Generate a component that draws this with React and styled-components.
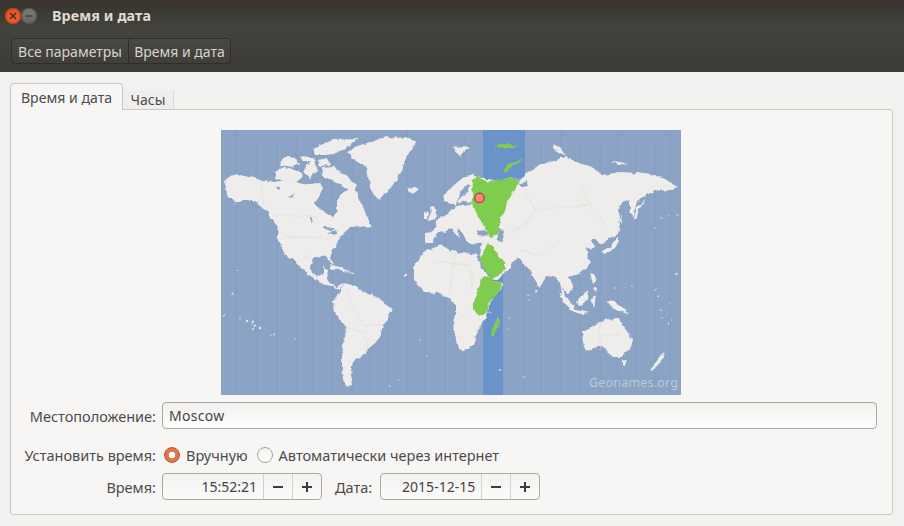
import React from "react";
import styled, { createGlobalStyle } from "styled-components";

const Global = createGlobalStyle`
  html, body { margin: 0; padding: 0; background: #f2f1f0; }
  body { font-family: "Noto Sans", "Open Sans", sans-serif; font-size: 14px; color: #4c4c4c; }
  * { box-sizing: border-box; }
`;

const Window = styled.div`
  width: 904px;
  height: 526px;
  display: flex;
  flex-direction: column;
  overflow: hidden;
  background: #f2f1f0;
`;
const TitleBar = styled.header`
  height: 30px;
  flex: none;
  display: flex;
  align-items: center;
  padding: 0 0 0 5px;
  background: linear-gradient(#36342f, #45433e);
  border-top: 1px solid #4a2f2c;
`;
const WinButton = styled.span`
  width: 16px;
  height: 16px;
  border-radius: 50%;
  display: flex;
  align-items: center;
  justify-content: center;
  background: ${(p) => (p.$close ? "radial-gradient(circle at 50% 60%, #f0643a, #d9481c)" : "linear-gradient(#7c7a75, #66645f)")};
  box-shadow: inset 0 0 0 1px ${(p) => (p.$close ? "#b8401c" : "#55534e")};
`;
const Title = styled.h1`
  margin: 0 0 0 15px;
  font-size: 14.3px;
  font-weight: 700;
  color: #dfdbd2;
  letter-spacing: 0.1px;
`;
const Toolbar = styled.div`
  height: 42px;
  flex: none;
  display: flex;
  align-items: flex-start;
  padding: 8px 0 0 11px;
  background: linear-gradient(#44423d, #3c3b37 90%);
`;
const Crumbs = styled.div`
  display: flex;
  height: 26px;
  border: 1px solid #2f2e2a;
  border-radius: 4px;
  background: linear-gradient(#4a4842, #403e39);
`;
const Crumb = styled.span`
  display: flex;
  align-items: center;
  justify-content: center;
  width: ${(p) => p.$w}px;
  color: #d6d3cb;
  font-size: 14px;
  white-space: nowrap;
  & + & { border-left: 1px solid #2f2e2a; }
`;
const Content = styled.main`
  flex: 1;
  display: flex;
  flex-direction: column;
  padding: 11px 11px 11px 10px;
  min-height: 0;
`;
const Tabs = styled.div`
  display: flex;
  align-items: flex-end;
  height: 26px;
  flex: none;
  position: relative;
  z-index: 1;
`;
const Tab = styled.div`
  display: flex;
  align-items: center;
  justify-content: center;
  width: ${(p) => p.$w}px;
  height: ${(p) => (p.$active ? 27 : 19)}px;
  color: #4c4c4c;
  font-size: 14.1px;
  white-space: nowrap;
  background: ${(p) => (p.$active ? "#f7f6f5" : "#efeeec")};
  border-style: solid;
  border-color: ${(p) => (p.$active ? "#c9c7c3" : "#dcdad6")};
  border-width: ${(p) => (p.$active ? "1px 1px 0 1px" : "0 1px 0 0")};
  border-radius: ${(p) => (p.$active ? "4px 4px 0 0" : "0")};
  margin-bottom: ${(p) => (p.$active ? "-1px" : "0")};
`;
const Panel = styled.section`
  flex: 1;
  display: flex;
  flex-direction: column;
  align-items: center;
  padding: 20px 15px 0 16px;
  background: #f7f6f5;
  border: 1px solid #c9c7c3;
  border-radius: 0 3px 3px 3px;
`;
const MapFrame = styled.div`
  width: 460px;
  height: 265px;
  flex: none;
  margin-left: -3px;
`;
const MapSvg = styled.svg`
  display: block;
  width: 460px;
  height: 265px;
`;
const Form = styled.div`
  align-self: stretch;
  display: grid;
  grid-template-columns: 129px 1fr;
  column-gap: 6px;
  margin-top: 7px;
  align-items: center;
`;
const Label = styled.label`
  justify-self: end;
  font-size: 14.5px;
  white-space: nowrap;
  color: #4c4c4c;
`;
const TextBox = styled.div`
  height: 27px;
  display: flex;
  align-items: center;
  padding: 0 6px;
  border: 1px solid #aaa8a3;
  border-radius: 4px;
  background: linear-gradient(#f1f0ee, #fff);
  font-size: 14px;
  letter-spacing: 0.3px;
  color: #444;
`;
const RadioRow = styled.div`
  display: flex;
  align-items: center;
  height: 27px;
  margin-top: 12px;
  margin-left: 2px;
`;
const Radio = styled.span`
  width: 16px;
  height: 16px;
  border-radius: 50%;
  flex: none;
  margin-right: 6px;
  border: 1px solid ${(p) => (p.$on ? "#b95a33" : "#a5a39e")};
  background: ${(p) => (p.$on ? "radial-gradient(circle, #fff 0 3px, #e37a50 3.6px, #d9673c)" : "linear-gradient(#f2f1ef, #fff)")};
`;
const RadioText = styled.span`
  font-size: 14.5px;
  margin-right: ${(p) => p.$gap || 0}px;
  white-space: nowrap;
`;
const FirstLabel = styled(Label)`
  margin-top: 12px;
`;
const SecondLabel = styled(Label)`
  margin-top: 5px;
`;
const SpinRow = styled.div`
  display: flex;
  align-items: center;
  margin-top: 5px;
`;
const Spin = styled.div`
  width: 160px;
  height: 27px;
  display: flex;
  border: 1px solid #aaa8a3;
  border-radius: 4px;
  background: linear-gradient(#f4f3f1, #fafaf9);
  overflow: hidden;
`;
const SpinValue = styled.span`
  flex: 1;
  text-align: right;
  line-height: 25px;
  padding-right: 6px;
  font-size: 14px;
  color: #444;
`;
const SpinButton = styled.span`
  width: 29px;
  display: flex;
  align-items: center;
  justify-content: center;
  border-left: 1px solid #d4d2ce;
  color: #3c3c3c;
`;
const DateLabel = styled(Label)`
  margin: 0 8px 0 13px;
`;

const Sign = ({ plus }) => (
  <svg width="12" height="12" viewBox="0 0 12 12">
    <path d={plus ? "M1 6h10M6 1v10" : "M1 6h10"} stroke="#3c3c3c" strokeWidth="2" />
  </svg>
);

const land = [
  "M224,181 L229,177 L240,175 L253,178 L273,182 L287,180 L303,184 L320,183 L323,188 L317,200 L315,203 L323,211 L333,218 L337,210 L337,200 L341,194 L350,189 L358,192 L361,204 L367,216 L372,227 L360,226 L350,227 L342,235 L336,245 L330,257 L333,262 L332,265 L327,257 L315,256 L310,265 L312,273 L317,277 L323,273 L323,268 L328,270 L327,278 L331,284 L337,287 L340,284 L345,283 L339,290 L333,287 L327,285 L313,278 L300,268 L294,260 L287,258 L278,238 L277,225 L267,212 L253,200 L243,200 L230,208 L237,203 L228,197 L225,188 Z",
  "M275,172 L284,167 L297,170 L303,177 L296,182 L284,181 L275,178 Z",
  "M279,165 L286,157 L296,158 L300,164 L292,167 Z",
  "M305,165 L314,161 L318,170 L310,178 L304,174 Z",
  "M322,168 L333,167 L345,175 L357,185 L353,193 L343,186 L330,180 L323,175 Z",
  "M313,148 L333,140 L357,139 L343,150 L327,155 L315,155 Z",
  "M300,155 L312,158 L316,162 L303,162 Z",
  "M318,160 L328,158 L330,165 L320,166 Z",
  "M347,153 L360,145 L387,137 L405,138 L417,142 L407,155 L402,170 L397,180 L380,200 L374,195 L370,188 L367,168 L353,158 Z",
  "M407,189 L413,186 L419,189 L413,194 Z",
  "M430,207 L434,206 L437,218 L428,221 L431,214 Z",
  "M424,213 L429,212 L428,219 L424,219 Z",
  "M425,233 L431,232 L437,226 L436,220 L445,216 L451,210 L456,207 L453,203 L445,201 L443,196 L452,187 L462,178 L473,175 L487,180 L500,181 L510,178 L520,181 L525,174 L531,170 L540,165 L550,162 L560,158 L567,157 L578,162 L590,167 L603,175 L620,172 L637,173 L650,175 L663,178 L678,186 L670,190 L655,191 L648,194 L641,198 L636,205 L634,217 L630,212 L630,200 L622,203 L618,210 L620,225 L618,234 L608,240 L600,244 L595,240 L591,240 L594,247 L590,250 L586,246 L588,256 L591,263 L584,270 L575,275 L568,277 L574,288 L568,294 L563,287 L566,300 L563,298 L560,284 L556,277 L545,276 L540,288 L537,285 L530,270 L522,262 L516,258 L511,263 L512,268 L505,272 L498,280 L490,279 L484,266 L479,254 L481,244 L470,243 L466,240 L462,232 L458,228 L459,238 L450,228 L445,232 L437,233 L432,243 L425,243 Z",
  "M414,266 L425,250 L433,248 L443,245 L450,251 L462,252 L476,255 L482,268 L490,280 L503,283 L495,297 L488,305 L486,318 L478,330 L473,345 L462,352 L457,345 L453,325 L456,308 L450,298 L438,293 L425,292 L414,280 Z",
  "M333,303 L338,294 L345,283 L355,286 L363,292 L375,296 L392,308 L388,320 L383,325 L380,337 L367,350 L360,358 L353,362 L350,375 L352,384 L348,387 L343,380 L342,368 L342,357 L345,327 L336,315 Z",
  "M582,333 L592,327 L600,322 L605,318 L611,320 L618,317 L623,326 L632,338 L630,348 L623,357 L613,357 L603,347 L597,347 L586,351 L583,343 Z",
  "M622,360 L626,359 L625,365 L622,364 Z",
  "M650,369 L656,362 L660,356 L663,351 L664,358 L657,366 L651,371 Z",
  "M558,292 L564,296 L572,304 L576,311 L571,309 L563,302 Z",
  "M572,309 L581,311 L590,313 L582,314 L574,312 Z",
  "M576,302 L581,296 L588,290 L587,298 L583,305 L578,306 Z",
  "M591,299 L596,296 L594,307 Z",
  "M607,301 L615,302 L622,307 L629,314 L622,312 L613,309 Z",
  "M590,273 L593,274 L596,281 L593,284 Z",
  "M593,288 L597,287 L596,292 Z",
  "M602,251 L611,246 L617,236 L618,243 L612,251 L604,254 Z",
  "M634,218 L637,208 L646,198 L640,208 L636,218 Z",
  "M619,220 L621,214 L622,224 Z",
  "M535,289 L538,291 L536,294 Z",
  "M453,147 L464,146 L470,148 L460,156 L456,153 Z",
  "M553,145 L559,148 L567,155 L558,153 Z",
  "M611,161 L620,162 L628,164 L618,165 Z",
  "M330,265 L338,267 L352,272 L341,271 L331,268 Z",
  "M347,272 L353,273 L351,275 Z",
];

const green = [
  "M473,178 L478,176 L487,183 L497,180 L510,178 L520,181 L512,195 L505,208 L500,222 L497,235 L492,237 L487,231 L483,225 L473,208 L472,200 Z",
  "M503,172 L508,164 L523,158 L514,165 L507,172 Z",
  "M495,146 L505,144 L518,145 L510,148 L499,148 Z",
  "M488,243 L494,247 L499,258 L505,263 L505,270 L492,280 L485,270 L480,258 Z",
  "M484,276 L494,281 L502,283 L495,297 L488,303 L486,313 L480,316 L473,311 L475,297 Z",
  "M491,335 L493,326 L498,318 L500,321 L497,332 L493,337 Z",
];

const water = [
  "M315,203 L322,200 L330,201 L337,200 L337,210 L333,218 L323,211 Z",
  "M275,188 L281,186 L279,190 Z",
  "M288,198 L294,194 L291,198 Z",
  "M310,214 L312,219 L313,224 L310,220 Z",
  "M323,226 L331,228 L336,229 L330,231 L326,229 Z",
  "M327,233 L337,231 L334,236 Z",
  "M456,207 L460,198 L468,190 L471,185 L465,186 L459,194 Z",
  "M452,207 L462,205 L470,204 L473,202 L466,200 L460,203 L454,205 Z",
  "M477,231 L485,230 L490,234 L484,236 L478,235 Z",
  "M497,227 L503,230 L504,242 L498,241 Z",
  "M446,243 L470,243 L473,249 L450,247 Z",
  "M518,185 L524,183 L526,180 L528,186 L522,187 Z",
];

const borders = [
  "M262,181 L263,205 M274,215 L316,216 M284,236 L333,238 M296,262 L310,256",
  "M350,303 L362,325 L383,325 M345,327 L365,332 L367,350 M348,290 L351,303",
  "M435,262 L470,265 L472,290 M455,252 L450,295 M480,300 L457,320",
  "M525,190 L535,210 L525,225 L510,232 M535,210 L590,205 L605,225 M560,240 L540,255 L520,250 M590,205 L580,185",
  "M600,322 L600,350 M600,335 L620,335",
];

const islands = [
  [248, 320, 1.2], [252, 323, 1.4], [256, 325, 1.3], [260, 328, 1.3], [254, 329, 1], [233, 293, 0.9], [225, 315, 0.9],
  [237, 270, 0.8], [239, 318, 0.7], [271, 335, 0.8], [275, 335, 0.8], [296, 339, 0.8], [405, 275, 1.2],
  [663, 317, 0.9], [668, 323, 0.9], [672, 320, 0.8], [657, 297, 1], [677, 275, 0.9], [615, 288, 0.7], [625, 288, 0.7],
  [633, 285, 0.7], [645, 287, 0.7], [655, 290, 0.7], [670, 303, 0.7], [660, 310, 0.7], [528, 295, 0.7], [529, 300, 0.7],
  [509, 318, 0.8], [508, 330, 0.7], [500, 370, 0.9], [489, 312, 0.8], [524, 377, 0.7], [420, 340, 0.7], [427, 355, 0.7],
  [398, 380, 0.7], [389, 385, 0.8], [655, 228, 0.7], [662, 217, 0.7], [669, 216, 0.7], [678, 215, 0.7],
];

const zones = [236, 256, 277, 296, 313, 332, 352, 370, 388, 407, 425, 445, 464, 523, 541, 561, 580, 600, 618, 636, 655, 670];

const WorldMap = () => (
  <MapSvg viewBox="221 130 460 265" aria-label="Карта часовых поясов">
    <defs>
      <filter id="coast" x="-2%" y="-2%" width="104%" height="104%">
        <feTurbulence type="fractalNoise" baseFrequency="0.14" numOctaves="3" seed="7" result="noise" />
        <feDisplacementMap in="SourceGraphic" in2="noise" scale="5" xChannelSelector="R" yChannelSelector="G" />
        <feGaussianBlur stdDeviation="0.45" />
      </filter>
    </defs>
    <rect x="221" y="130" width="460" height="265" fill="#8ba3c5" />
    {zones.map((x, i) => (
      <path key={x} d={`M${x} ${i % 3 === 0 ? 130 : 142}V395`} stroke="#849cbf" strokeWidth="1" />
    ))}
    <path d="M483 130H525V178H503V395H483Z" fill="#6a93c9" />
    <g filter="url(#coast)">
      {land.map((d) => (
        <path key={d} d={d} fill="#efedeb" />
      ))}
      {borders.map((d) => (
        <path key={d} d={d} fill="none" stroke="#e0dedc" strokeWidth="0.8" />
      ))}
      {water.map((d) => (
        <path key={d} d={d} fill="#8ba3c5" />
      ))}
      {green.map((d) => (
        <path key={d} d={d} fill="#80cc50" />
      ))}
      {islands.map(([x, y, r]) => (
        <circle key={`${x}-${y}`} cx={x} cy={y} r={r} fill="#dfe6ef" />
      ))}
    </g>
    <path d="M479.5 198l-1.5 6h3z" fill="#d9d3b0" />
    <circle cx="479.5" cy="198" r="4.7" fill="#f58a8a" stroke="#c5402a" strokeWidth="1.4" />
    <text x="589" y="387" fill="#ffffff" fillOpacity="0.42" fontFamily="Noto Sans, sans-serif" fontSize="12.5" letterSpacing="0.2">
      Geonames.org
    </text>
  </MapSvg>
);

export default function App() {
  return (
    <Window>
      <Global />
      <TitleBar>
        <WinButton $close>
          <svg width="8" height="8" viewBox="0 0 8 8">
            <path d="M1 1l6 6M7 1L1 7" stroke="#4a2413" strokeWidth="1.4" />
          </svg>
        </WinButton>
        <WinButton>
          <svg width="8" height="8" viewBox="0 0 8 8">
            <path d="M0.5 4h7" stroke="#45433e" strokeWidth="1.4" />
          </svg>
        </WinButton>
        <Title>Время и дата</Title>
      </TitleBar>
      <Toolbar>
        <Crumbs>
          <Crumb $w={116}>Все параметры</Crumb>
          <Crumb $w={102}>Время и дата</Crumb>
        </Crumbs>
      </Toolbar>
      <Content>
        <Tabs>
          <Tab $active $w={113}>Время и дата</Tab>
          <Tab $w={51}>Часы</Tab>
        </Tabs>
        <Panel>
          <MapFrame>
            <WorldMap />
          </MapFrame>
          <Form>
            <Label>Местоположение:</Label>
            <TextBox>Moscow</TextBox>
            <FirstLabel>Установить время:</FirstLabel>
            <RadioRow>
              <Radio $on />
              <RadioText $gap={9}>Вручную</RadioText>
              <Radio />
              <RadioText>Автоматически через интернет</RadioText>
            </RadioRow>
            <SecondLabel>Время:</SecondLabel>
            <SpinRow>
              <Spin>
                <SpinValue>15:52:21</SpinValue>
                <SpinButton><Sign /></SpinButton>
                <SpinButton><Sign plus /></SpinButton>
              </Spin>
              <DateLabel>Дата:</DateLabel>
              <Spin>
                <SpinValue>2015-12-15</SpinValue>
                <SpinButton><Sign /></SpinButton>
                <SpinButton><Sign plus /></SpinButton>
              </Spin>
            </SpinRow>
          </Form>
        </Panel>
      </Content>
    </Window>
  );
}
